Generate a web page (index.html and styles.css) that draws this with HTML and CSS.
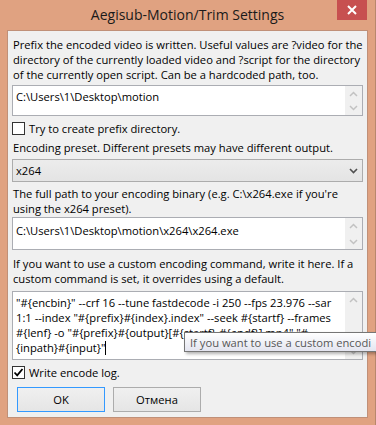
FILE: index.html
```html
<!DOCTYPE html>
<html lang="en">
<head>
    <meta charset="UTF-8">
    <title>Aegisub-Motion/Trim Settings</title>
    <link rel="stylesheet" href="styles.css">
</head>
<body>
    <div class="window">
        <div class="titlebar">
            <span></span>
            <span class="title">Aegisub-Motion/Trim Settings</span>
            <span class="close">
                <svg width="10" height="10" viewBox="0 0 10 10"><path d="M1 1L9 9M9 1L1 9" stroke="#fff" stroke-width="2"/></svg>
            </span>
        </div>
        <div class="client">
            <p class="label">Prefix the encoded video is written. Useful values are ?video for the<br>directory of the currently loaded video and ?script for the directory<br>of the currently open script. Can be a hardcoded path, too.</p>

            <div class="textbox tb-prefix">
                <div class="tb-text">C:\Users\1\Desktop\motion</div>
                <div class="vscroll">
                    <svg width="9" height="6" viewBox="0 0 9 6"><path d="M1 5L4.5 1.5L8 5" fill="none" stroke="#c2c2c2" stroke-width="1.5"/></svg>
                    <svg width="9" height="6" viewBox="0 0 9 6"><path d="M1 1L4.5 4.5L8 1" fill="none" stroke="#c2c2c2" stroke-width="1.5"/></svg>
                </div>
            </div>

            <label class="check"><span class="box"></span>Try to create prefix directory.</label>

            <p class="label label-one">Encoding preset. Different presets may have different output.</p>

            <div class="combo">
                <span>x264</span>
                <svg width="9" height="6" viewBox="0 0 9 6"><path d="M1 1L4.5 4.5L8 1" fill="none" stroke="#505050" stroke-width="1.6"/></svg>
            </div>

            <p class="label label-path">The full path to your encoding binary (e.g. C:\x264.exe if you're<br>using the x264 preset).</p>

            <div class="textbox tb-binary">
                <div class="tb-text">C:\Users\1\Desktop\motion\x264\x264.exe</div>
                <div class="vscroll">
                    <svg width="9" height="6" viewBox="0 0 9 6"><path d="M1 5L4.5 1.5L8 5" fill="none" stroke="#c2c2c2" stroke-width="1.5"/></svg>
                    <svg width="9" height="6" viewBox="0 0 9 6"><path d="M1 1L4.5 4.5L8 1" fill="none" stroke="#c2c2c2" stroke-width="1.5"/></svg>
                </div>
            </div>

            <p class="label label-custom">If you want to use a custom encoding command, write it here. If a<br>custom command is set, it overrides using a default.</p>

            <div class="textbox tb-command">
                <div class="tb-text">"#{encbin}" --crf 16 --tune fastdecode -i 250 --fps 23.976 --sar<br>1:1 --index "#{prefix}#{index}.index" --seek #{startf} --frames<br>#{lenf} -o "#{prefix}#{output}[#{startf}-#{endf}].mp4" "#<br>{inpath}#{input}"<span class="caret"></span></div>
                <div class="vscroll">
                    <svg width="9" height="6" viewBox="0 0 9 6"><path d="M1 5L4.5 1.5L8 5" fill="none" stroke="#c2c2c2" stroke-width="1.5"/></svg>
                    <svg width="9" height="6" viewBox="0 0 9 6"><path d="M1 1L4.5 4.5L8 1" fill="none" stroke="#c2c2c2" stroke-width="1.5"/></svg>
                </div>
            </div>

            <label class="check check-log"><span class="box"><svg width="11" height="11" viewBox="0 0 11 11"><path d="M1.5 5.5L4.2 8.3L9.5 2" fill="none" stroke="#000" stroke-width="1.8"/></svg></span>Write encode log.</label>

            <div class="buttons">
                <button class="btn btn-default">OK</button>
                <button class="btn">Отмена</button>
            </div>
        </div>

        <div class="tooltip">If you want to use a custom encodi</div>
    </div>
</body>
</html>
```

FILE: styles.css
```css
html, body{
    margin: 0;
    padding: 0;
    overflow: hidden;
}
body{
    width: 376px;
    height: 425px;
    background-color: #e0a281;
    font-family: "Open Sans", "Noto Sans", sans-serif;
    font-size: 11.2px;
    color: #000;
}
.window{
    position: relative;
    width: 376px;
    height: 425px;
    box-sizing: border-box;
    border-right: 1px solid #b8876c;
}
.titlebar{
    height: 30px;
    display: grid;
    grid-template-columns: 1fr auto 1fr;
    align-items: start;
}
.title{
    font-size: 14px;
    line-height: 18px;
    padding-top: 6px;
    color: #1a1a1a;
}
.close{
    justify-self: end;
    margin-right: 8px;
    width: 30px;
    height: 20px;
    background-color: #c75050;
    display: flex;
    align-items: center;
    justify-content: center;
}
.client{
    margin-left: 7px;
    width: 361px;
    height: 388px;
    box-sizing: border-box;
    border: 1px solid #c09078;
    background-color: #f0f0f0;
    padding: 6px 4px 0 4px;
}
.label{
    margin: 0;
    line-height: 15px;
    padding-left: 1px;
    white-space: nowrap;
}
.label-one{
    margin-top: 4px;
}
.label-path{
    margin-top: 4px;
}
.label-custom{
    margin-top: 6px;
}
.textbox{
    display: flex;
    box-sizing: border-box;
    border: 1px solid #abadb3;
    background-color: #fff;
}
.tb-prefix{
    margin-top: 3px;
    height: 31px;
}
.tb-binary{
    margin-top: 1px;
    height: 33px;
}
.tb-command{
    margin-top: 5px;
    height: 69px;
}
.tb-text{
    flex: 1;
    padding: 3px 0 0 3px;
    line-height: 15px;
    white-space: nowrap;
    overflow: hidden;
}
.tb-binary .tb-text{
    padding-top: 5px;
}
.caret{
    display: inline-block;
    width: 1px;
    height: 14px;
    background-color: #000;
    vertical-align: -3px;
}
.vscroll{
    width: 17px;
    background-color: #f0f0f0;
    display: flex;
    flex-direction: column;
    justify-content: space-between;
    align-items: center;
    padding: 5px 0 4px 0;
}
.check{
    display: flex;
    align-items: center;
    gap: 4px;
    height: 15px;
    margin-top: 5px;
    white-space: nowrap;
}
.check-log{
    margin-top: 5px;
}
.box{
    width: 13px;
    height: 13px;
    box-sizing: border-box;
    border: 1px solid #333;
    background-color: #fff;
    display: flex;
    align-items: center;
    justify-content: center;
}
.combo{
    margin-top: 4px;
    height: 23px;
    box-sizing: border-box;
    border: 1px solid #acacac;
    background: linear-gradient(#ececec, #e4e4e4);
    display: flex;
    align-items: center;
    justify-content: space-between;
    padding: 0 4px 0 3px;
}
.buttons{
    display: flex;
    gap: 8px;
    margin-top: 7px;
    padding-left: 5px;
}
.btn{
    width: 88px;
    height: 25px;
    border: 1px solid #acacac;
    background: linear-gradient(#f0f0f0, #e5e5e5);
    font-family: "Open Sans", "Noto Sans", sans-serif;
    font-size: 11.2px;
    color: #000;
    padding: 0;
}
.btn-default{
    border-color: #3399ff;
}
.tooltip{
    position: absolute;
    left: 184px;
    top: 332px;
    width: 200px;
    height: 20px;
    box-sizing: border-box;
    padding: 1px 0 0 5px;
    line-height: 17px;
    white-space: nowrap;
    overflow: hidden;
    color: #575757;
    border: 1px solid #767676;
    background: linear-gradient(#ffffff, #e4e5f0);
    box-shadow: 2px 2px 3px rgba(0, 0, 0, 0.3);
}
```
